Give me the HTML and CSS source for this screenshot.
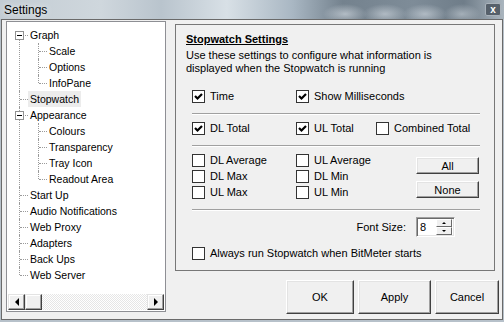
FILE: index.html
```html
<!DOCTYPE html>
<html lang="en">
<head>
    <meta charset="UTF-8">
    <title>Settings</title>
    <link rel="stylesheet" href="styles.css">
</head>
<body>
    <div class="titlebar">
        <span class="title">Settings</span>
        <span class="close">x</span>
    </div>

    <div class="window">
        <div class="tree-box">
            <ul class="tree">
                <li>
                    <div class="row"><span class="exp"></span><span class="label">Graph</span></div>
                    <ul>
                        <li><div class="row"><span class="label">Scale</span></div></li>
                        <li><div class="row"><span class="label">Options</span></div></li>
                        <li><div class="row"><span class="label">InfoPane</span></div></li>
                    </ul>
                </li>
                <li><div class="row"><span class="label selected">Stopwatch</span></div></li>
                <li>
                    <div class="row"><span class="exp"></span><span class="label">Appearance</span></div>
                    <ul>
                        <li><div class="row"><span class="label">Colours</span></div></li>
                        <li><div class="row"><span class="label">Transparency</span></div></li>
                        <li><div class="row"><span class="label">Tray Icon</span></div></li>
                        <li><div class="row"><span class="label">Readout Area</span></div></li>
                    </ul>
                </li>
                <li><div class="row"><span class="label">Start Up</span></div></li>
                <li><div class="row"><span class="label">Audio Notifications</span></div></li>
                <li><div class="row"><span class="label">Web Proxy</span></div></li>
                <li><div class="row"><span class="label">Adapters</span></div></li>
                <li><div class="row"><span class="label">Back Ups</span></div></li>
                <li><div class="row"><span class="label">Web Server</span></div></li>
            </ul>
            <div class="hscroll">
                <span class="sb-btn"><span class="arrow-left"></span></span>
                <span class="sb-thumb"></span>
                <span class="sb-track"></span>
                <span class="sb-btn"><span class="arrow-right"></span></span>
            </div>
        </div>

        <div class="side">
            <div class="panel">
                <h2 class="panel-title">Stopwatch Settings</h2>
                <p class="panel-desc">Use these settings to configure what information is<br>displayed when the Stopwatch is running</p>

                <div class="opts">
                    <div class="opt-row first">
                        <label class="chk"><span class="box on"></span>Time</label>
                        <label class="chk"><span class="box on"></span>Show Milliseconds</label>
                    </div>
                    <div class="sep"></div>
                    <div class="opt-row">
                        <label class="chk"><span class="box on"></span>DL Total</label>
                        <label class="chk"><span class="box on"></span>UL Total</label>
                        <label class="chk"><span class="box"></span>Combined Total</label>
                    </div>
                    <div class="sep"></div>
                    <div class="opt-grid">
                        <label class="chk"><span class="box"></span>DL Average</label>
                        <label class="chk"><span class="box"></span>UL Average</label>
                        <div class="small-btns">
                            <button class="btn small">All</button>
                            <button class="btn small">None</button>
                        </div>
                        <label class="chk"><span class="box"></span>DL Max</label>
                        <label class="chk"><span class="box"></span>DL Min</label>
                        <label class="chk"><span class="box"></span>UL Max</label>
                        <label class="chk"><span class="box"></span>UL Min</label>
                    </div>
                    <div class="sep"></div>
                    <div class="font-row">
                        <span>Font Size:</span>
                        <div class="spin">
                            <span class="spin-val">8</span>
                            <div class="spin-btns">
                                <span class="spin-btn"><span class="tri-up"></span></span>
                                <span class="spin-btn"><span class="tri-down"></span></span>
                            </div>
                        </div>
                    </div>
                    <div class="opt-row last">
                        <label class="chk"><span class="box"></span>Always run Stopwatch when BitMeter starts</label>
                    </div>
                </div>
            </div>

            <div class="actions">
                <button class="btn ok">OK</button>
                <button class="btn apply">Apply</button>
                <button class="btn cancel">Cancel</button>
            </div>
        </div>
    </div>
</body>
</html>
```

FILE: styles.css
```css
*{
    box-sizing: border-box;
}

body{
    margin: 0;
    width: 504px;
    height: 322px;
    overflow: hidden;
    background-color: #b7c1ca;
    font-family: "Liberation Sans", Arial, sans-serif;
    font-size: 11px;
    color: #000;
}

/* glass title bar */
.titlebar{
    height: 19px;
    display: flex;
    align-items: center;
    overflow: hidden;
    background:
        radial-gradient(ellipse 22px 10px at 345px 14px, rgba(230, 236, 242, 0.55), transparent),
        radial-gradient(ellipse 22px 10px at 385px 14px, rgba(230, 236, 242, 0.5), transparent),
        radial-gradient(ellipse 22px 10px at 425px 14px, rgba(230, 236, 242, 0.5), transparent),
        radial-gradient(ellipse 18px 10px at 462px 14px, rgba(230, 236, 242, 0.45), transparent),
        linear-gradient(90deg, #c3ccd3 0%, #cfd7dd 20%, #b9c4cd 32%, #d8e0e6 45%, #a9b7c3 58%, #74828e 68%, #7e8c98 82%, #6f7d89 92%, #aab5be 100%);
}

.title{
    margin-left: 4px;
    font-size: 12px;
    color: #000;
    text-shadow: 0 0 6px rgba(255, 255, 255, 0.9);
}

.close{
    margin-left: auto;
    margin-right: 3px;
    width: 16px;
    height: 13px;
    display: flex;
    align-items: center;
    justify-content: center;
    background-color: #56606a;
    border: 1px solid #a9b2ba;
    border-radius: 2px;
    color: #fff;
    font-weight: bold;
    font-size: 10px;
    line-height: 1;
}

/* dialog body */
.window{
    margin-left: 1px;
    width: 502px;
    height: 301px;
    border: 1px solid #6a6a6a;
    background-color: #f0f0f0;
    padding: 1px 0 0 4px;
    display: flex;
}

.tree-box{
    width: 160px;
    height: 291px;
    border: 1px solid #8e8f94;
    padding: 1px;
    background-color: #fff;
    display: flex;
    flex-direction: column;
}

.tree, .tree ul{
    list-style: none;
    margin: 0;
    padding: 0;
}

.tree{
    flex: 1;
    padding-top: 4px;
    font-size: 10.5px;
}

.tree ul{
    padding-left: 19px;
}

.tree li{
    position: relative;
}

.tree li::before{
    content: '';
    position: absolute;
    left: 11px;
    top: 0;
    bottom: 0;
    border-left: 1px dotted #9a9a9a;
}

.tree > li:first-child::before{
    top: 8px;
}

.tree li:last-child::before{
    bottom: auto;
    height: 8px;
}

.row{
    position: relative;
    height: 16px;
    display: flex;
    align-items: center;
    padding-left: 20px;
}

.row::before{
    content: '';
    position: absolute;
    left: 12px;
    top: 8px;
    width: 8px;
    border-top: 1px dotted #9a9a9a;
}

.exp{
    position: absolute;
    z-index: 1;
    left: 7px;
    top: 4px;
    width: 9px;
    height: 9px;
    border: 1px solid #919191;
    background-color: #fff;
}

.exp::after{
    content: '';
    position: absolute;
    left: 1px;
    top: 3px;
    width: 5px;
    height: 1px;
    background-color: #000;
}

.label{
    padding: 0 2px;
    line-height: 16px;
    white-space: nowrap;
}

.label.selected{
    background-color: #ececec;
}

.hscroll{
    height: 16px;
    display: flex;
}

.sb-btn, .sb-thumb{
    width: 17px;
    height: 16px;
    background-color: #f0f0f0;
    border: 1px solid;
    border-color: #e3e3e3 #404040 #404040 #e3e3e3;
    box-shadow: inset -1px -1px 0 #a0a0a0, inset 1px 1px 0 #fff;
    display: flex;
    align-items: center;
    justify-content: center;
}

.sb-track{
    flex: 1;
    background: repeating-conic-gradient(#fff 0 25%, #e6e6e6 0 50%) 0 0 / 2px 2px;
}

.arrow-left{
    border-top: 4px solid transparent;
    border-bottom: 4px solid transparent;
    border-right: 4px solid #000;
}

.arrow-right{
    border-top: 4px solid transparent;
    border-bottom: 4px solid transparent;
    border-left: 4px solid #000;
}

/* right side */
.side{
    width: 324px;
    margin-left: 9px;
    padding-top: 3px;
}

.panel{
    width: 320px;
    height: 247px;
    border: 1px solid #777;
    padding: 8px 0 0 10px;
}

.panel-title{
    margin: 0;
    font-size: 11px;
    font-weight: bold;
    line-height: 13px;
    text-decoration: underline;
}

.panel-desc{
    margin: 3px 0 0;
    line-height: 13px;
}

.opts{
    margin-left: 6px;
    width: 288px;
}

.opt-row{
    height: 16px;
    display: grid;
    grid-template-columns: 104px 80px 1fr;
    align-items: center;
    margin-top: 5px;
}

.opt-row.first{
    margin-top: 13px;
}

.opt-row.last{
    margin-top: 8px;
}

.chk{
    display: flex;
    align-items: center;
    white-space: nowrap;
    height: 16px;
}

.box{
    width: 13px;
    height: 13px;
    margin-right: 5px;
    background-color: #fff;
    border: 1px solid #333;
    flex-shrink: 0;
}

.box.on{
    background: #fff url("data:image/svg+xml,%3Csvg xmlns='http://www.w3.org/2000/svg' width='11' height='11'%3E%3Cpath d='M2 5 L4.5 7.5 L9 3' fill='none' stroke='%23000' stroke-width='2.2'/%3E%3C/svg%3E") no-repeat center;
}

.sep{
    margin-top: 9px;
    border-top: 1px solid #a0a0a0;
    border-bottom: 1px solid #fff;
}

.opt-grid{
    margin-top: 5px;
    display: grid;
    grid-template-columns: 104px 120px 63px;
    grid-template-rows: repeat(3, 16px);
    align-items: center;
}

.small-btns{
    grid-column: 3;
    grid-row: 1 / 4;
    align-self: start;
    display: flex;
    flex-direction: column;
    gap: 7px;
    padding-top: 5px;
}

.font-row{
    width: 263px;
    height: 20px;
    margin-top: 6px;
    display: flex;
    justify-content: flex-end;
    align-items: center;
    gap: 10px;
}

.spin{
    width: 39px;
    height: 20px;
    background-color: #fff;
    border: 1px solid;
    border-color: #a0a0a0 #fff #fff #a0a0a0;
    box-shadow: inset 1px 1px 0 #696969, inset -1px -1px 0 #e3e3e3;
    display: flex;
    align-items: center;
    padding: 2px;
}

.spin-val{
    flex: 1;
    padding-left: 1px;
}

.spin-btns{
    width: 16px;
    height: 16px;
    display: flex;
    flex-direction: column;
}

.spin-btn{
    flex: 1;
    background-color: #f0f0f0;
    border: 1px solid;
    border-color: #fff #696969 #696969 #fff;
    display: flex;
    align-items: center;
    justify-content: center;
}

.tri-up{
    border-left: 2px solid transparent;
    border-right: 2px solid transparent;
    border-bottom: 2px solid #000;
}

.tri-down{
    border-left: 2px solid transparent;
    border-right: 2px solid transparent;
    border-top: 2px solid #000;
}

/* push buttons */
.btn{
    font-family: "Liberation Sans", Arial, sans-serif;
    font-size: 11px;
    color: #000;
    background-color: #f0f0f0;
    border: 1px solid;
    border-color: #fff #404040 #404040 #fff;
    box-shadow: inset -1px -1px 0 #a0a0a0, inset 1px 1px 0 #e3e3e3;
    padding: 0;
    border-radius: 0;
}

.btn.small{
    width: 63px;
    height: 17px;
}

.actions{
    margin-top: 9px;
    display: flex;
    justify-content: flex-end;
    gap: 4px;
}

.actions .btn{
    height: 34px;
}

.ok{
    width: 68px;
}

.apply{
    width: 73px;
}

.cancel{
    width: 64px;
}
```
